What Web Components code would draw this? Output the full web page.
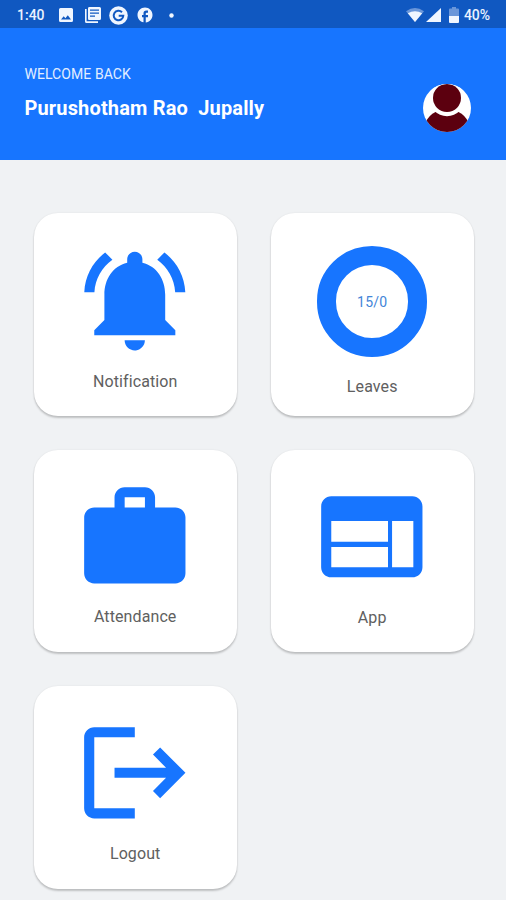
<!DOCTYPE html>
<html lang="en">
<head>
<meta charset="utf-8">
<title>Dashboard</title>
<style>
  body {
    margin: 0;
    height: 900px;
    overflow: hidden;
    background: #f0f2f4;
    font-family: Roboto, "Noto Sans", sans-serif;
    --blue: #1775ff;
    --blue-dark: #1058c1;
  }
</style>
</head>
<body>

<status-bar time="1:40" battery="40%"></status-bar>

<user-header>
  <span slot="greeting">WELCOME BACK</span>
  <span slot="name">Purushotham Rao&nbsp; Jupally</span>
</user-header>

<menu-grid>
  <menu-card icon="bell" style="--icon-top: 26.5px; --label-top: 10.8px">Notification</menu-card>
  <menu-card ring="15/0" style="--icon-top: 33.4px; --label-top: 20.2px">Leaves</menu-card>
  <menu-card icon="work" style="--icon-top: 27.2px; --label-top: 8.6px">Attendance</menu-card>
  <menu-card icon="web" style="--icon-top: 26px; --label-top: 10.5px">App</menu-card>
  <menu-card icon="logout" style="--icon-top: 25.8px; --label-top: 10.4px">Logout</menu-card>
</menu-grid>

<script>
// 24x24 icon paths
const ICONS = {
  bell: "M7.58 4.08L6.15 2.65C3.75 4.48 2.17 7.3 2.03 10.5h2c.15-2.65 1.51-4.97 3.55-6.42zm12.39 6.42h2c-.15-3.2-1.73-6.02-4.12-7.85l-1.42 1.43c2.02 1.45 3.39 3.77 3.54 6.42zM18 11c0-3.07-1.64-5.64-4.5-6.32V4c0-.83-.67-1.5-1.5-1.5s-1.5.67-1.5 1.5v.68C7.63 5.36 6 7.92 6 11v5l-2 2v1h16v-1l-2-2v-5zm-6 11c.14 0 .27-.01.4-.04.65-.14 1.18-.58 1.44-1.18.1-.24.15-.5.15-.78h-4c.01 1.1.9 2 2.01 2z",
  work: "M20 6h-4V4c0-1.11-.89-2-2-2h-4c-1.11 0-2 .89-2 2v2H4c-1.11 0-1.99.89-1.99 2L2 19c0 1.11.89 2 2 2h16c1.11 0 2-.89 2-2V8c0-1.11-.89-2-2-2zm-6 0h-4V4h4v2z",
  web: "M20 4H4c-1.1 0-1.99.9-1.99 2L2 18c0 1.1.9 2 2 2h16c1.1 0 2-.9 2-2V6c0-1.1-.9-2-2-2zm-5 14H4v-4h11.2v4zm0-5H4V8.9h11.2V13zm5 5h-4V8.9h4.2V18z",
  logout: "M17 7l-1.41 1.41L18.17 11H8v2h10.17l-2.58 2.58L17 17l5-5zM4 5h8V3H4c-1.1 0-2 .9-2 2v14c0 1.1.9 2 2 2h8v-2H4V5z",
};

class StatusBar extends HTMLElement {
  constructor() {
    super();
    this.attachShadow({ mode: "open" });
  }

  connectedCallback() {
    this.shadowRoot.innerHTML = /* html */`
      <style>
        :host {
          display: flex;
          align-items: center;
          justify-content: space-between;
          box-sizing: border-box;
          height: 28px;
          padding: 2px 15px 0 17px;
          background: var(--blue-dark);
          color: #eaf2ff;
          font-size: 14px;
          font-weight: 500;
          line-height: 26px;
        }
        div { display: flex; align-items: center; }
        svg { display: block; fill: #f0f6ff; }
        .time { width: 42px; }
        .battery { width: 27px; letter-spacing: -.1px; }
      </style>

      <div>
        <span class="time">${this.getAttribute("time")}</span>
        <!-- picture -->
        <svg width="14" height="14" viewBox="0 0 14 14">
          <path fill-rule="evenodd" d="M1.5 0h11Q14 0 14 1.5v11Q14 14 12.5 14h-11Q0 14 0 12.5v-11Q0 0 1.5 0zM2 11.5h10L8.8 7.2 6.4 10.2 4.7 8.2z"/>
        </svg>
        <!-- news -->
        <svg style="margin-left: 12px" width="16" height="16" viewBox="0 0 16 16">
          <path fill-rule="evenodd" d="M4 0h10.5Q16 0 16 1.5v10Q16 13 14.5 13H4Q3 13 3 11.5v-10Q3 0 4 0zM5 2.5v1.3h9V2.5zM5 5.6v1.2h9V5.6zM5 8.5v1.2h5V8.5z"/>
          <path d="M0 2h1.6v12.3H13V16H1.5Q0 16 0 14.5z"/>
        </svg>
        <!-- G in a circle -->
        <svg style="margin-left: 8px" width="19" height="19" viewBox="0 0 19 19">
          <circle cx="9.5" cy="9.5" r="9.3"/>
          <path d="M13 6.2A4.8 4.8 0 1 0 14.3 9.7H9.7" fill="none" stroke="#1058c1" stroke-width="2"/>
        </svg>
        <!-- facebook -->
        <svg style="margin-left: 8px" width="18" height="18" viewBox="0 0 24 24">
          <path d="M22 12c0-5.52-4.48-10-10-10S2 6.48 2 12c0 4.84 3.44 8.87 8 9.8V15H8v-3h2V9.5C10 7.57 11.57 6 13.5 6H16v3h-2c-.55 0-1 .45-1 1v2h3v3h-3v6.95c5.05-.5 9-4.76 9-9.95z"/>
        </svg>
        <svg style="margin-left: 15px" width="5" height="5"><circle cx="2.5" cy="2.5" r="2.2"/></svg>
      </div>

      <div>
        <!-- wifi -->
        <svg width="18" height="14" viewBox="0 0 18 14">
          <path opacity=".4" d="M9 14L0 3.2Q9-3.2 18 3.2z"/>
          <path d="M9 14L1.8 5.3Q9 1 16.2 5.3z"/>
        </svg>
        <!-- signal -->
        <svg style="margin-left: 2px" width="15" height="14" viewBox="0 0 15 14"><path d="M15 0v14H0z"/></svg>
        <!-- battery -->
        <svg style="margin-left: 8px" width="10" height="16" viewBox="0 0 10 16">
          <path opacity=".4" d="M3 0h4v1.6h2q1 0 1 1V9H0V2.6q0-1 1-1h2z"/>
          <path d="M0 9h10v6q0 1-1 1H1q-1 0-1-1z"/>
        </svg>
        <span class="battery" style="margin-left: 5px">${this.getAttribute("battery")}</span>
      </div>
    `;
  }
}

class UserHeader extends HTMLElement {
  constructor() {
    super();
    this.attachShadow({ mode: "open" });
    this.shadowRoot.innerHTML = /* html */`
      <style>
        :host {
          display: flex;
          justify-content: space-between;
          box-sizing: border-box;
          height: 132.4px;
          padding: 36px 35px 0 24.4px;
          background: var(--blue);
          color: #fff;
        }
        .greeting {
          margin-top: 1px;
          font-size: 14px;
          line-height: 18px;
          letter-spacing: .08px;
          color: #e2edff;
        }
        .name {
          margin-top: 13px;
          font-size: 20px;
          line-height: 24px;
          font-weight: 700;
          letter-spacing: .16px;
          white-space: nowrap;
        }
        svg { margin-top: 20px; }
      </style>
      <div>
        <div class="greeting"><slot name="greeting"></slot></div>
        <div class="name"><slot name="name"></slot></div>
      </div>
      <!-- avatar -->
      <svg width="48" height="48" viewBox="0 0 48 48">
        <clipPath id="round"><circle cx="24" cy="24" r="24"/></clipPath>
        <g clip-path="url(#round)">
          <rect width="48" height="48" fill="#fff"/>
          <path d="M2 39Q6 31 12.5 28H35.5Q42 31 46 39V48H2z" fill="#5c000f"/>
          <circle cx="24" cy="14" r="18.2" fill="#fff"/>
          <circle cx="24" cy="14" r="14" fill="#5c000f"/>
        </g>
      </svg>
    `;
  }
}

class MenuGrid extends HTMLElement {
  constructor() {
    super();
    this.attachShadow({ mode: "open" });
    this.shadowRoot.innerHTML = /* html */`
      <style>
        :host {
          display: grid;
          grid-template-columns: 203px 203px;
          grid-auto-rows: 202.6px;
          gap: 34px;
          padding: 52.6px 0 0 33.7px;
        }
      </style>
      <slot></slot>
    `;
  }
}

class MenuCard extends HTMLElement {
  constructor() {
    super();
    this.attachShadow({ mode: "open" });
  }

  connectedCallback() {
    this.render();
  }

  render() {
    const ring = this.getAttribute("ring");
    const picture = ring
      ? `<div class="ring">${ring}</div>`
      : `<svg viewBox="0 0 24 24"><path d="${ICONS[this.getAttribute("icon")]}"/></svg>`;

    this.shadowRoot.innerHTML = /* html */`
      <style>
        :host {
          display: flex;
          flex-direction: column;
          align-items: center;
          box-sizing: border-box;
          padding-top: var(--icon-top);
          border-radius: 24px;
          background: #fff;
          box-shadow: 0 2px 2px rgba(0, 0, 0, .2), 0 0 2px rgba(0, 0, 0, .08);
        }
        svg {
          width: 121.6px;
          height: 121.6px;
          flex-shrink: 0;
          fill: var(--blue);
        }
        .ring {
          display: flex;
          align-items: center;
          justify-content: center;
          box-sizing: border-box;
          width: 110.4px;
          height: 110.4px;
          flex-shrink: 0;
          border: 19px solid var(--blue);
          border-radius: 50%;
          color: #4385d8;
          font-size: 14px;
          letter-spacing: .2px;
        }
        .label {
          margin-top: var(--label-top);
          font-size: 16px;
          line-height: 20px;
          letter-spacing: .1px;
          color: #606060;
        }
      </style>
      ${picture}
      <div class="label"><slot></slot></div>
    `;
  }
}

customElements.define("status-bar", StatusBar);
customElements.define("user-header", UserHeader);
customElements.define("menu-grid", MenuGrid);
customElements.define("menu-card", MenuCard);
</script>
</body>
</html>
